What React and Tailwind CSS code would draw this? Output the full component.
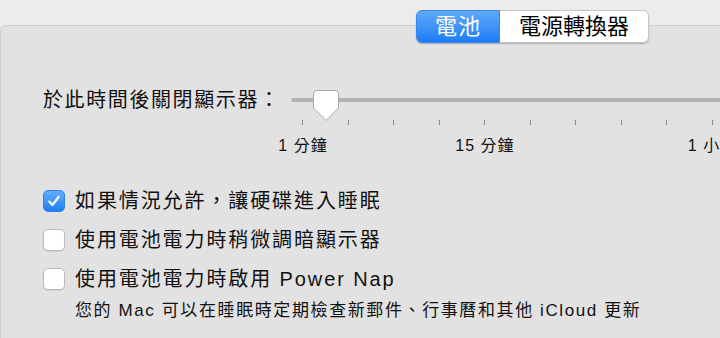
const FONT = { fontFamily: '"Liberation Sans", "Noto Sans CJK TC", sans-serif' };

const ticks = [
    { label: "1 分鐘" },
    {},
    {},
    {},
    { label: "15 分鐘" },
    {},
    {},
    {},
    {},
    { label: "1 小時" },
];

const options = [
    { text: "如果情況允許，讓硬碟進入睡眠", checked: true },
    { text: "使用電池電力時稍微調暗顯示器", checked: false },
    { text: "使用電池電力時啟用 Power Nap", checked: false },
];

function CheckBox({ checked }) {
    if (checked) {
        return (
            <div className="w-[22px] h-[22px] rounded-[5px] bg-gradient-to-b from-[#64adfc] to-[#1d7ff6] border border-[#2f82ee] flex items-center justify-center shrink-0">
                <svg width="16" height="16" viewBox="0 0 16 16">
                    <path d="M3.2 8.6 L6.4 12 L12.8 3.8" fill="none" stroke="#fff" strokeWidth="2.2" strokeLinecap="round" strokeLinejoin="round" />
                </svg>
            </div>
        );
    }
    return <div className="w-[22px] h-[22px] rounded-[5px] bg-white border border-[#b9b9b9] shadow-[0_1px_1px_rgba(0,0,0,0.08)] shrink-0" />;
}

function Thumb() {
    return (
        <svg width="28" height="33" viewBox="0 0 28 33" className="absolute left-[21px] top-[5px]">
            <path
                d="M5 1.5 H23 A3.5 3.5 0 0 1 26.5 5 V19 L14 31.5 L1.5 19 V5 A3.5 3.5 0 0 1 5 1.5 Z"
                fill="#ffffff"
                stroke="#a9a9a9"
                strokeWidth="1"
            />
        </svg>
    );
}

export default function App() {
    return (
        <div className="w-[720px] h-[338px] overflow-hidden bg-[#ececec] relative text-[#111]" style={FONT}>
            <div className="h-[25px]" />
            <div className="h-[313px] w-[740px] bg-[#e2e2e2] border-t border-l border-[#d0d0d0] rounded-tl-[6px]">
                {/* 滑桿 */}
                <div className="flex items-start pt-[58px] pl-[42px]">
                    <div className="w-[254px] h-[32px] leading-[32px] text-[20px] tracking-[1.6px] whitespace-nowrap">於此時間後關閉顯示器：</div>
                    <div className="relative w-[460px]">
                        <div className="h-[32px] flex items-center">
                            <div className="h-[4px] w-full rounded-full bg-[#b3b3b3]" />
                        </div>
                        <Thumb />
                        <div className="flex -ml-[10.75px] mt-[4px]">
                            {ticks.map((t, i) => (
                                <div key={i} className="w-[45.5px] shrink-0 flex flex-col items-center">
                                    <div className="w-px h-[5px] bg-[#8a8a8a]" />
                                    <div className="w-0 h-[18px] mt-[12px] flex justify-center">
                                        {t.label && (
                                            <span className="text-[16px] leading-[18px] tracking-[1px] whitespace-nowrap">{t.label}</span>
                                        )}
                                    </div>
                                </div>
                            ))}
                        </div>
                    </div>
                </div>

                {/* 選項 */}
                <div className="pl-[42px] mt-[26px]">
                    {options.map((o, i) => (
                        <div key={i} className="h-[39px] flex items-center gap-[10px]">
                            <CheckBox checked={o.checked} />
                            <span className="text-[20px] leading-[24px] tracking-[1.9px] whitespace-nowrap">{o.text}</span>
                        </div>
                    ))}
                    <div className="ml-[32px] mt-[2px] h-[22px] leading-[22px] text-[17px] tracking-[1.6px] whitespace-nowrap">
                        您的 Mac 可以在睡眠時定期檢查新郵件、行事曆和其他 iCloud 更新
                    </div>
                </div>
            </div>

            {/* 分頁控制 */}
            <div className="absolute left-[416px] top-[10px] w-[233px] h-[33px] flex rounded-[6px] shadow-[0_1px_1.5px_rgba(0,0,0,0.25)]">
                <div className="w-[84px] h-full rounded-l-[6px] bg-gradient-to-b from-[#5fa9fb] to-[#1a7cf5] border border-[#3a86ee] flex items-center justify-center text-white text-[22px] tracking-[1px]">
                    電池
                </div>
                <div className="flex-1 h-full rounded-r-[6px] bg-white border border-l-0 border-[#c6c6c6] flex items-center justify-center text-[22px] text-black">
                    電源轉換器
                </div>
            </div>
        </div>
    );
}
